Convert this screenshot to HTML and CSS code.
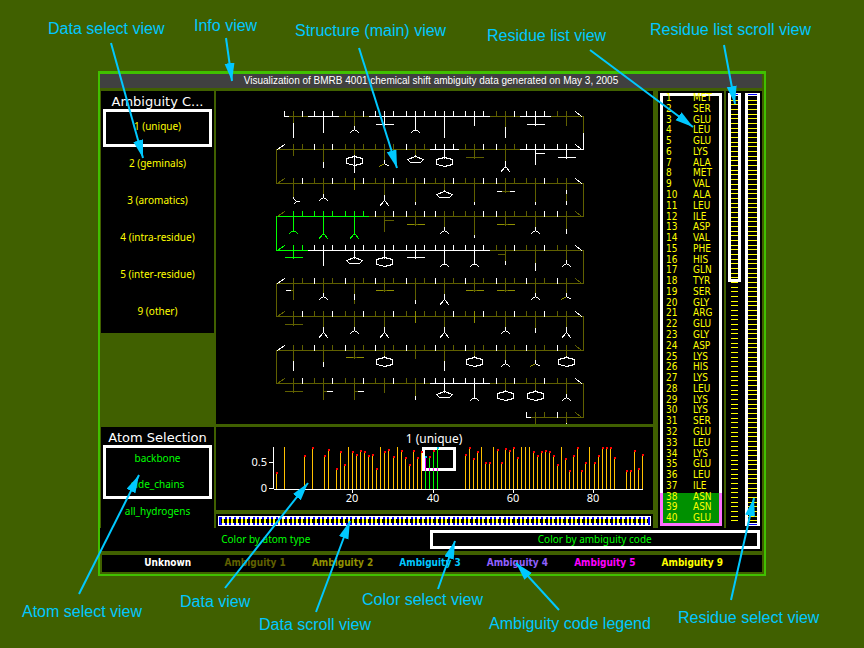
FILE: index.html
```html
<!DOCTYPE html>
<html lang="en">
<head>
<meta charset="utf-8">
<title>Ambiguity data views</title>
<link rel="stylesheet" href="styles.css">
</head>
<body>
<div class="stage">
  <main class="window">
    <header class="info">Visualization of BMRB 4001 chemical shift ambiguity data generated on May 3, 2005</header>
    <div class="views">
      <div class="side">
        <section class="panel categories">
          <h2>Ambiguity C...</h2>
          <button class="category selected">1 (unique)</button>
          <button class="category">2 (geminals)</button>
          <button class="category">3 (aromatics)</button>
          <button class="category">4 (intra-residue)</button>
          <button class="category">5 (inter-residue)</button>
          <button class="category">9 (other)</button>
        </section>
        <section class="panel atoms">
          <h2>Atom Selection</h2>
          <div class="atom-group">
            <button>backbone</button>
            <button>side_chains</button>
          </div>
          <button>all_hydrogens</button>
        </section>
      </div>
      <div class="center">
        <section class="panel"><svg class="plot" id="structure" viewBox="216 91 437 333"></svg></section>
        <section class="panel data"><svg class="plot" id="data" viewBox="216 427 437 83"></svg></section>
        <section class="panel data-scroll">
          <svg class="checker" id="checker" viewBox="0 0 433 10" preserveAspectRatio="none"></svg>
        </section>
      </div>
      <section class="panel residues">
        <div class="residue-frame">
          <table><tbody id="residues"></tbody></table>
        </div>
      </section>
      <section class="panel scrolls">
        <div class="strip"><svg id="strip-list" width="7" height="433"></svg></div>
        <div class="strip wide"><svg id="strip-select" width="9" height="433"></svg></div>
      </section>
    </div>
    <div class="colors">
      <button>Color by atom type</button>
      <button class="selected">Color by ambiguity code</button>
    </div>
    <footer class="legend">
      <span class="unknown">Unknown</span>
      <span class="a1">Ambiguity 1</span>
      <span class="a2">Ambiguity 2</span>
      <span class="a3">Ambiguity 3</span>
      <span class="a4">Ambiguity 4</span>
      <span class="a5">Ambiguity 5</span>
      <span class="a9">Ambiguity 9</span>
    </footer>
  </main>
  <svg class="notes" viewBox="0 0 864 648">
    <defs>
      <marker id="head" markerUnits="userSpaceOnUse" markerWidth="20" markerHeight="12" refX="18" refY="5" orient="auto">
        <path d="M0 0L18 5L0 10Z" fill="#00c8ff"/>
      </marker>
    </defs>
    <g id="arrows"></g>
    <text x="48" y="34">Data select view</text>
    <text x="194" y="31">Info view</text>
    <text x="295" y="36">Structure (main) view</text>
    <text x="487" y="41">Residue list view</text>
    <text x="650" y="35">Residue list scroll view</text>
    <text x="22" y="617">Atom select view</text>
    <text x="180" y="607">Data view</text>
    <text x="259" y="630">Data scroll view</text>
    <text x="362" y="605">Color select view</text>
    <text x="489" y="629">Ambiguity code legend</text>
    <text x="678" y="623">Residue select view</text>
  </svg>
</div>
<script src="views.js"></script>
</body>
</html>
```
FILE: styles.css
```css
*, *::before, *::after { box-sizing: border-box; }

body {
  margin: 0;
  background: #406000;
  font: 10px/12px "Noto Sans", sans-serif;
}

.stage {
  position: relative;
  padding: 71px 98px 72px;
}

.window {
  border: 2px solid #40c000;
  border-top-width: 3px;
  background: #406000;
}

button {
  display: block;
  width: 100%;
  margin: 0;
  padding: 0;
  border: 0;
  background: none;
  color: #0f0;
  font: inherit;
}

.panel { background: #000; }

.info {
  height: 14px;
  margin-right: 2px;
  background: #404040;
  color: #fff;
  font: 10px/14px "Liberation Sans", sans-serif;
  text-align: center;
}

.views {
  display: flex;
  margin: 3px 2px 0 1px;
}

.side {
  display: flex;
  flex-direction: column;
  justify-content: space-between;
  flex: 0 0 113px;
  margin-right: 2px;
}

h2 {
  margin: 0 0 -3px;
  color: #fff;
  font: 13px/21px "DejaVu Sans", sans-serif;
  text-align: center;
}

.categories { padding: 0 2px 1px; }

.category {
  height: 37px;
  padding-bottom: 6px;
  color: #ff0;
}

.category.selected {
  height: 38px;
  padding-bottom: 4px;
  border: 3px solid #fff;
}

.atoms { padding: 0 2px 4px; }
.atoms button { height: 26px; }

.atom-group {
  height: 54px;
  margin-bottom: -1px;
  border: 3px solid #fff;
}

.atom-group button:first-child { margin-top: -3px; }

.center { flex: 1; min-width: 0; }
.plot { display: block; width: 100%; height: auto; }
.data { margin-top: 3px; }
.plot path, .plot rect { shape-rendering: crispEdges; }
.plot text { fill: #fff; font-size: 11px; text-anchor: middle; }
.plot .title { font-size: 12px; }
.plot .value { text-anchor: end; }

.data-scroll { margin-top: 4px; padding: 2px; }
.checker { display: block; width: 100%; height: 10px; }

.residues {
  flex: 0 0 66px;
  margin-left: 5px;
  padding: 2px;
}

.residue-frame {
  position: relative;
  height: 433px;
  border: 3px solid #fff;
}

.residue-frame::after {
  content: "";
  position: absolute;
  inset: auto -3px -3px;
  height: 33px;
  border: 3px solid #ff70ff;
  border-top: 0;
}

.residues table {
  display: block;
  height: 431px;
  margin-top: -2px;
}

.residues tbody {
  display: grid;
  grid-template-rows: repeat(40, 1fr);
  height: 100%;
  color: #ff0;
  font-family: "DejaVu Sans Condensed", "DejaVu Sans", sans-serif;
}

.residues tr {
  display: grid;
  grid-template-columns: 27px 1fr;
  align-items: start;
  min-height: 0;
  padding-left: 3px;
  line-height: 7px;
}

.residues td { padding: 0; }
.residues .picked { background: #009000; }

.scrolls {
  display: flex;
  align-items: flex-start;
  gap: 4px;
  flex: 0 0 36px;
  margin-left: 2px;
  padding: 2px;
}

.strip {
  position: relative;
  flex: 0 0 13px;
  height: 433px;
  padding: 0 3px;
}

.strip::before {
  content: "";
  position: absolute;
  inset: 0 0 auto;
  height: 189px;
  border: 3px solid #fff;
}

.strip.wide { flex-basis: 15px; }
.strip.wide::before { height: 433px; }
.strip svg { position: relative; display: block; }

.colors {
  display: flex;
  height: 23px;
  margin-right: 2px;
  padding: 2px;
  background: #000;
}

.colors button { padding-bottom: 2px; }
.colors .selected { border: 3px solid #fff; }

.legend {
  display: flex;
  margin: 4px 2px 2px;
  padding: 0 26px 1px 22px;
  background: #000;
  font: bold 10px/16px "DejaVu Sans Condensed", "DejaVu Sans", sans-serif;
}

.legend span { flex: 1; text-align: center; }
.unknown { color: #fff; }
.a1 { color: #606000; }
.a2 { color: #909000; }
.a3 { color: #00c8ff; }
.a4 { color: #9060ff; }
.a5 { color: #f0f; }
.a9 { color: #ff0; }

.notes {
  position: absolute;
  top: 0;
  left: 0;
  width: 100%;
  pointer-events: none;
}

.notes text {
  fill: #00c8ff;
  font: 16px "Liberation Sans", sans-serif;
}

.notes line { stroke: #00c8ff; stroke-width: 2; }
```
FILE: views.js
```js
const INK = { W: '#fff', O: '#606000', B: '#909000', G: '#0f0', Y: '#ff0' };
const byId = id => document.getElementById(id);

// ---- Structure view ----
// Each residue: backbone colour, left and right tick colours, then its side
// chain. A chain is a shape with colours and lengths measured from the backbone.
const COLS = [293, 323, 354, 384, 415, 444, 474, 505, 535, 566];
const ROWS = [116, 149, 183, 216, 250, 283, 316, 350, 383, 417];
const CHAINS = [
  'OWW O6W20|WWW W15|OOW O10y13|WWW W8t8|WWW W13y13|WWW W20|WWW W8|OOW O10W20|WWW W8t8|OOW O8',
  'OWO O5|OWW O12W17|OOO O7h7W22|OOO O11z14|OWO O7p7|WWW W8h8|OOW O8t8|OWO O12W17v17|WWW W14f4|WWW W8t8',
  'OOW O13k13|OOW O11y14|OOW B5|OOW O11v17|OOW O18W20|OOW O7p8|OOW O18W20|OWO O8m8|OOW O18W20|OOW O6W10O17W20',
  'GGG G14y14|GGG G17v17|GGG G17v17|OWW O14g4|OWW O8b8|OWO O11y14|OOW O18W20|OWO O8b8|OOW O11y14|OWO O12W16',
  'GGG G7t7|WWW W14|WWW W7p7|WWW W7h7|WWW W7t7|WWW W13y13|WWW W13y13|OOW O10W13l4|OOW O12W19|OOW O10y13',
  'OWO O15q7|OWO O10y13|OWO O10W16O19|OWO O7b7|OWO O16W19|OWO O11v16|OWO O7b7|OWO O7b7|OWO O10y13|OWO O10z13',
  'OOW O8t8|OOW O11v16|OOW O11y14|OOW O11v16|OOO B5|OOW O11v16|OOW B5|OOW O11y14|OOW O11W15|OOW O11v16',
  'OWO O10W19|OWO O11W15|OWO O7b7|OWO O5h7|OWO O7|OWO O10W19|OWO O5h7|OWO O10y13|OWO O10z13|OWO O5h7',
  'OOW O8t8|OOW O15r8|OOW O15r8|OOW O8|OOW O12W15|WWW W8p8|WWW W14y14|OWW O6h8|OOW O6h8|OOW O11y14',
  '||||||||OWO O7|OWO O5W7'
];
const END_LEFT = '.WOOGWOWO.';
const END_RIGHT = 'WWWOWOWOWO';

const parts = [];
const line = (ink, d) => parts.push(`<path d="${d}" stroke="${INK[ink]}" fill="none"/>`);

function sideChain(x, y, code) {
  let at = 0, ink = 'O';
  for (const [, op, num] of code.matchAll(/([A-Za-z])(\d+)/g)) {
    const n = +num, yy = y + n;
    if ('WOBG'.includes(op)) {
      line(op, `M${x} ${y + at}V${yy + 1}`);
      at = n; ink = op;
      continue;
    }
    const tip = ink === 'G' ? 'G' : 'W';
    if (op === 't') line(ink, `M${x - 9} ${yy}H${x + 9}`);
    if (op === 'b') { line('B', `M${x - 9} ${yy}H${x + 9}`); line('O', `M${x - 2} ${yy}H${x + 2}`); }
    if (op === 'm') { line('W', `M${x - 9} ${yy}H${x + 9}`); line('O', `M${x - 4} ${yy}H${x + 4}`); }
    if (op === 'f') line('W', `M${x} ${yy}H${x + 9}`);
    if (op === 'g') line('O', `M${x} ${yy}H${x + 9}`);
    if (op === 'l') line('O', `M${x - 8} ${yy}H${x}`);
    if (op === 'q') { line('W', `M${x - 8} ${yy}H${x - 3}`); line('O', `M${x - 3} ${yy}H${x}`); }
    if (op === 'r') { line('O', `M${x} ${yy}H${x + 3}`); line('W', `M${x + 3} ${yy}H${x + 9}`); }
    if (op === 'y') line(tip, `M${x} ${yy - 4}V${yy}L${x - 3} ${yy + 2}L${x - 5} ${yy + 4}M${x} ${yy}L${x + 3} ${yy + 2}L${x + 5} ${yy + 4}`);
    if (op === 'z') { line('W', `M${x} ${yy - 4}V${yy}L${x + 5} ${yy + 3}`); line('B', `M${x} ${yy}L${x - 5} ${yy + 3}`); }
    if (op === 'v') line(tip, `M${x} ${yy - 6}V${yy}L${x - 5} ${yy + 6}M${x} ${yy}L${x + 5} ${yy + 6}`);
    if (op === 'k') line('W', `M${x} ${yy}V${yy + 2}L${x + 3} ${yy + 5}H${x + 6}M${x + 3} ${yy + 5}L${x} ${yy + 8}`);
    if (op === 'h') line('W', `M${x} ${yy - 2}V${yy}L${x + 8} ${yy + 2}V${yy + 7}L${x} ${yy + 9}L${x - 8} ${yy + 7}V${yy + 2}L${x} ${yy}`);
    if (op === 'p') line('W', `M${x} ${yy - 2}V${yy}L${x + 8} ${yy + 3}L${x + 5} ${yy + 6}H${x - 5}L${x - 8} ${yy + 3}L${x} ${yy}`);
  }
}

CHAINS.forEach((row, r) => {
  const y = ROWS[r] + 0.5;
  row.split('|').forEach((cell, c) => {
    if (!cell) return;
    const x = COLS[c] + 0.5;
    const [inks, chain] = cell.split(' ');
    const from = c ? (COLS[c - 1] + COLS[c]) / 2 : r ? 276 : 284;
    const start = r === 9 && c === 8 ? 526 : from;
    const end = c < 9 ? (COLS[c] + COLS[c + 1]) / 2 : 584;
    line(inks[0], `M${start} ${y}H${end}`);
    if (c || !r) line(inks[1], `M${x - 9} ${y - 5.5}V${y}`);
    line(chain[0], `M${x} ${y - 5.5}V${y + 1}`);
    if (c < 9) line(inks[2], `M${x + 9} ${y - 5.5}V${y}`);
    sideChain(x, y, chain);
  });
  if (END_LEFT[r] !== '.') line(END_LEFT[r], `M277 ${y}L285 ${y - 5}`);
  line(END_RIGHT[r], `M575 ${y - 5}L582 ${y}`);
});
line('W', 'M284 116.5H289M526 417.5H531');
[[583.5, 0, 'O'], [276.5, 1, 'O'], [583.5, 2, 'O'], [276.5, 3, 'G'], [583.5, 4, 'O'],
 [276.5, 5, 'O'], [583.5, 6, 'O'], [276.5, 7, 'O'], [583.5, 8, 'O']].forEach(([x, r, ink]) =>
  line(ink, `M${x} ${ROWS[r]}V${ROWS[r + 1] + 1}`));
line('W', 'M583.5 133V150');
byId('structure').innerHTML = parts.join('');

// ---- Data view: residue number and bar height; 42 is a clipped bar ----
const BARS = [[1,16],[3,42],[8,33],[10,41.5],[13,33],[14,39],[16,20],[17,37],[18,24],[19,42],
  [20,37],[21,34],[22,38],[23,37],[24,33],[25,34],[26,20],[27,42],[28,37],[29,39],[30,32],[31,42],
  [32,38],[33,31],[34,24],[35,38],[36,31],[37,37],[38,32],[39,32],[40,38],[41,41.5],
  [48,34],[49,41.5],[50,30],[51,37],[52,42],[53,26],[54,26],[55,42],[56,39],[57,26],[58,40],[59,38],
  [60,41],[61,31],[62,42],[63,42],[64,42],[65,37],[66,33],[67,37],[68,38],[69,37],[70,33],[71,24],
  [72,42],[73,30],[74,18],[75,33],[76,41.5],[77,18],[78,26],[79,42],[80,26],[81,33],[82,41],[83,41],
  [84,41.5],[85,31],[88,18],[89,18],[90,38],[91,20],[92,34]];
const base = 489;
let chart = '<path d="M273.5 447V489M269 462.5H273M269 488.5H273M274 489.5H643" stroke="#fff"/>';
[20, 40, 60, 80].forEach(n => {
  const x = Math.floor(272.3 + 4.02 * n);
  chart += `<path d="M${x + 0.5} 489V493" stroke="#fff"/><text x="${x}" y="502">${n}</text>`;
});
chart += '<text class="value" x="267" y="466">0.5</text><text class="value" x="267" y="492">0</text>';
chart += '<text class="title" x="434" y="443">1 (unique)</text>';
chart += '<rect x="423.5" y="448.5" width="31" height="21" fill="none" stroke="#fff" stroke-width="3"/>';
BARS.forEach(([n, h]) => {
  const x = Math.floor(272.4 + 4.02 * n), picked = n > 37 && n < 42;
  const top = Math.round(base - h);
  chart += `<rect x="${x}" y="${top}" width="1" height="${base - top}" fill="${picked ? '#0f0' : '#ffc000'}"/>`;
  if (picked) chart += `<rect x="${x}" y="${n === 38 ? top : 468}" width="1" height="${n === 38 ? 471 - top : 3}" fill="#f0f"/>`;
  if (h < 42) chart += `<rect x="${x}" y="${top - 1}" width="2" height="2" fill="${n === 38 || n === 41 ? '#00c8ff' : '#f00'}"/>`;
});
byId('data').innerHTML = chart;

// ---- Data scroll: one mark per residue, inverted where the frame crosses it ----
let checks = '<rect width="433" height="10" fill="#fff"/><rect x="3" y="3" width="427" height="4" fill="#000"/>';
for (let i = 0; i < 92; i++) {
  const x = Math.round(2 + i * 4.65);
  checks += `<rect x="${x + 2}" y="3" width="2" height="4" fill="#ff0"/>` +
    `<rect x="${x}" y="1" width="2" height="2" fill="#00f"/><rect x="${x}" y="7" width="2" height="2" fill="#00f"/>`;
}
checks += '<rect x="1" y="1" width="2" height="8" fill="#00f"/><rect x="430" y="1" width="2" height="8" fill="#00f"/>';
byId('checker').innerHTML = checks;

// ---- Residue list ----
const NAMES = ('MET SER GLU LEU GLU LYS ALA MET VAL ALA LEU ILE ASP VAL PHE HIS GLN TYR SER GLY ' +
  'ARG GLU GLY ASP LYS HIS LYS LEU LYS LYS SER GLU LEU LYS GLU LEU ILE ASN ASN GLU').split(' ');
byId('residues').innerHTML = NAMES.map((name, i) =>
  `<tr${i > 36 ? ' class="picked"' : ''}><td>${i + 1}</td><td>${name}</td></tr>`).join('');

// ---- Residue scroll strips: one mark per residue ----
function strip(id, width) {
  let marks = '';
  for (let i = 0; i < 92; i++) {
    const y = Math.round(2 + i * 4.675);
    marks += y > 3 && (width < 9 || y < 429) ? `<rect y="${y}" width="${width}" height="1" fill="#ff0"/>` : '';
  }
  marks += `<rect y="1" width="${width}" height="1" fill="#00f"/>`;
  if (width > 8) marks += `<rect y="431" width="${width}" height="1" fill="#00f"/>`;
  byId(id).innerHTML = marks;
}
strip('strip-list', 7);
strip('strip-select', 9);

// ---- Arrows from captions to views ----
byId('arrows').innerHTML = [
  [111, 43, 143, 158], [226, 38, 232, 81], [359, 48, 397, 168], [590, 50, 693, 127],
  [724, 45, 735, 104], [79, 594, 139, 475], [225, 588, 308, 483], [316, 612, 350, 521],
  [438, 589, 455, 541], [559, 610, 516, 563], [731, 600, 754, 498]
].map(([a, b, c, d]) => `<line x1="${a}" y1="${b}" x2="${c}" y2="${d}" marker-end="url(#head)"/>`).join('');
```
